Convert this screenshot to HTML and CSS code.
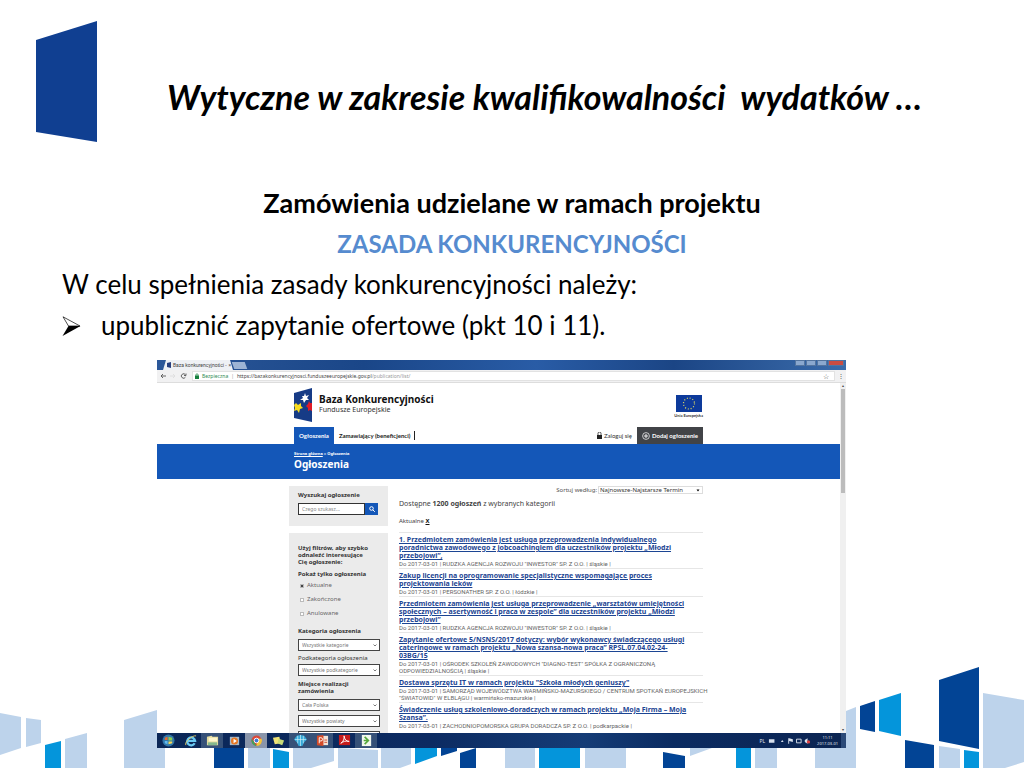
FILE: index.html
```html
<!DOCTYPE html>
<html lang="pl">
<head>
<meta charset="utf-8">
<title>Wytyczne w zakresie kwalifikowalności wydatków</title>
<link rel="stylesheet" href="styles.css">
</head>
<body>
<main class="slide">
  <svg class="decor" viewBox="0 0 1024 108" aria-hidden="true">
    <g transform="translate(0 -660)">
      <g fill="#bdd3eb">
        <path d="M0 713l21 4v31l-21 7zM26 718l15 2v23l-15 4zM65 739l22-6v35H65zM124 720l33-10v38h8v20h-41zM248 748h22v20h-22zM293 748h41v13l-23 7h-18zM338 748l40 2v18h-40zM381 748h30v16l-11 4h-19zM505 748h30v20h-30zM585 748h41v20h-41zM690 748h22l-22 8zM755 748h22v20h-22zM815 748h31v-37l10-4v61h-41zM939 746l21 3v19h-21zM983 693l41 7v62l-19 6h-22z"/>
      </g>
      <g fill="#0495db">
        <path d="M45 745l16-4v27H45zM273 749l16 3v16h-16zM415 748h22v8l-22 8zM539 748h41v20h-41zM736 748h15v20h-15zM879 700l22-7v43l-22-5zM964 750l15 2v16h-15z"/>
      </g>
      <g fill="#024495">
        <path d="M214 748h30v20h-30zM441 748h16v3l-16 5zM460 753l16-5v20h-16zM663 752l22 4v12h-22zM860 706l15-5v31l-15-3zM905 740l29 5v23h-29zM939 680l40-13v82l-40-8z"/>
      </g>
    </g>
  </svg>

  <header class="slide-head">
    <svg class="slide-logo" viewBox="0 0 61 121" aria-hidden="true"><path fill="#103f91" d="M0 19L61 0v121L0 111z"/></svg>
    <h1 class="slide-title">Wytyczne w zakresie kwalifikowalności&nbsp; wydatków …</h1>
  </header>

  <section class="copy">
    <h2 class="lead">Zamówienia udzielane w ramach projektu</h2>
    <h2 class="lead accent">ZASADA KONKURENCYJNOŚCI</h2>
    <p>W celu spełnienia zasady konkurencyjności należy:</p>
    <ul class="points">
      <li><svg class="arrow" viewBox="0 0 18 20" aria-hidden="true"><path d="M0 20L6 10h12z"/><path d="M.5.8L6 10h11.500z" fill="#fff" stroke="#000" stroke-width=".7"/></svg>upublicznić zapytanie ofertowe (pkt 10 i 11).</li>
    </ul>
  </section>

  <section class="desktop">
    <div class="tabbar">
      <div class="tab">
        <svg class="tab-icon" viewBox="0 0 4 6" aria-hidden="true"><path fill="#274080" d="M0 1l4-1v6l-4-1z"/></svg>
        <span>Baza konkurencyjności -</span><span class="tab-close">×</span>
      </div>
      <span class="new-tab"></span>
      <div class="window-buttons"><i></i><i></i><i></i><i class="close"></i></div>
    </div>
    <div class="toolbar">
      <svg class="nav-icons" viewBox="0 0 32 8" aria-hidden="true"><g fill="none" stroke="#555" stroke-width=".9"><path d="M9 4H4m2-2L4 4l2 2"/><path stroke="#ddd" d="M13 4h5m-2-2l2 2-2 2"/><path d="M28.500 3a2.200 2.200 0 1 0 0 2M29 1.500v2h-2"/></g></svg>
      <div class="address">
        <svg class="lock" viewBox="0 0 4 6" aria-hidden="true"><path fill="#16803e" d="M0 2.500h4V6H0z"/><path d="M1 3V1h2v2" fill="none" stroke="#16803e" stroke-width=".6"/></svg>
        <span class="secure">Bezpieczna</span><span class="bar">|</span><span class="url">https://bazakonkurencyjnosci.funduszeeuropejskie.gov.pl<span class="path">/publication/list/</span></span>
        <span class="star">☆</span>
      </div>
      <span class="dots">⋮</span>
    </div>

    <div class="viewport">
      <div class="site">
        <div class="site-head">
          <div class="brand-row">
            <svg class="brand-logo" viewBox="0 0 18 34" aria-hidden="true"><path fill="#163b86" d="M0 5l18-5v34L0 30z"/><path fill="#fff" d="M11 5l1 3 3-1-2 3 2 2-3 0-2 3-1-3-3 0 3-2-1-2 2 0z"/><path fill="#f8dc20" d="M2 15l2 2 3-2 0 3 2 2-3 1-1 4-2-3-3 1 1-3-1-3z"/><path fill="#df1b28" d="M15 13l1 2h2v8l-2-1-2 1v-3l-2-2 2-2z"/></svg>
            <div class="brand-name"><strong>Baza Konkurencyjności</strong><span>Fundusze Europejskie</span></div>
            <div class="eu">
              <svg viewBox="0 0 26 17" aria-hidden="true"><path fill="#0d3a9b" d="M0 0h26v17H0z"/><circle cx="13" cy="8.500" r="5.500" fill="none" stroke="#e2dc60" stroke-width="1.200" stroke-dasharray="1 1.880"/></svg>
              <span>Unia Europejska</span>
            </div>
          </div>
          <nav class="site-nav">
            <a class="active" href="#">Ogłoszenia</a>
            <a class="divided" href="#">Zamawiający (beneficjenci)</a>
            <a class="login" href="#"><svg viewBox="0 0 5 7" aria-hidden="true"><path fill="#222" d="M0 3h5v4H0z"/><path d="M1 3V1.500a1.500 1.500 0 0 1 3 0V3" fill="none" stroke="#222" stroke-width=".8"/></svg>Zaloguj się</a>
            <a class="add" href="#"><svg viewBox="0 0 8 8" aria-hidden="true"><path d="M4 2v4M2 4h4" stroke="#fff" stroke-width=".9"/><circle cx="4" cy="4" r="3.400" fill="none" stroke="#fff" stroke-width=".7"/></svg>Dodaj ogłoszenie</a>
          </nav>
        </div>
        <div class="band">
          <div class="crumbs"><a href="#">Strona główna</a> » Ogłoszenia</div>
          <h3>Ogłoszenia</h3>
        </div>
        <div class="content">
          <aside class="side">
            <form class="box search">
              <label class="side-title" for="q">Wyszukaj ogłoszenie</label>
              <div class="search-row">
                <input id="q" type="text" placeholder="Czego szukasz...">
                <button type="button" aria-label="Szukaj"><svg viewBox="0 0 6 6" aria-hidden="true"><circle cx="2.500" cy="2.500" r="1.800" fill="none" stroke="#fff"/><path d="M3.800 3.800l2 2" stroke="#fff"/></svg></button>
              </div>
            </form>
            <form class="box filters">
              <p class="side-title">Użyj filtrów, aby szybko<br>odnaleźć interesujące<br>Cię ogłoszenie:</p>
              <p class="side-title show">Pokaż tylko ogłoszenia</p>
              <label class="check"><input type="checkbox" checked>Aktualne</label>
              <label class="check"><input type="checkbox">Zakończone</label>
              <label class="check"><input type="checkbox">Anulowane</label>
              <label class="side-title" for="cat">Kategoria ogłoszenia</label>
              <select id="cat"><option>Wszystkie kategorie</option></select>
              <label class="side-label" for="sub">Podkategoria ogłoszenia</label>
              <select id="sub"><option>Wszystkie podkategorie</option></select>
              <label class="side-title place" for="region">Miejsce realizacji<br>zamówienia</label>
              <select id="region"><option>Cała Polska</option></select>
              <select aria-label="Powiat"><option>Wszystkie powiaty</option></select>
              <select aria-label="Gmina"><option></option></select>
            </form>
          </aside>
          <div class="results">
            <div class="sort"><label for="sort">Sortuj według:</label><select id="sort"><option>Najnowsze-Najstarsze Termin</option></select></div>
            <p class="count">Dostępne <strong>1200 ogłoszeń</strong> z wybranych kategorii</p>
            <p class="current">Aktualne <a href="#">X</a></p>
            <article><a href="#">1. Przedmiotem zamówienia jest usługa przeprowadzenia indywidualnego<br>poradnictwa zawodowego z jobcoachingiem dla uczestników projektu „Młodzi<br>przebojowi”,</a><p>Do 2017-03-01 | RUDZKA AGENCJA ROZWOJU "INWESTOR" SP. Z O.O. | śląskie |</p></article>
            <article><a href="#">Zakup licencji na oprogramowanie specjalistyczne wspomagające proces<br>projektowania leków</a><p>Do 2017-03-01 | PERSONATHER SP. Z O.O. | łódzkie |</p></article>
            <article><a href="#">Przedmiotem zamówienia jest usługa przeprowadzenie „warsztatów umiejętności<br>społecznych – asertywność i praca w zespole” dla uczestników projektu „Młodzi<br>przebojowi”</a><p>Do 2017-03-01 | RUDZKA AGENCJA ROZWOJU "INWESTOR" SP. Z O.O. | śląskie |</p></article>
            <article><a href="#">Zapytanie ofertowe 5/NSNS/2017 dotyczy: wybór wykonawcy świadczącego usługi<br>cateringowe w ramach projektu „Nowa szansa-nowa praca” RPSL.07.04.02-24-<br>03BG/15</a><p>Do 2017-03-01 | OŚRODEK SZKOLEŃ ZAWODOWYCH "DIAGNO-TEST" SPÓŁKA Z OGRANICZONĄ<br>ODPOWIEDZIALNOŚCIĄ | śląskie |</p></article>
            <article><a href="#">Dostawa sprzętu IT w ramach projektu "Szkoła młodych geniuszy"</a><p>Do 2017-03-01 | SAMORZĄD WOJEWÓDZTWA WARMIŃSKO-MAZURSKIEGO / CENTRUM SPOTKAŃ EUROPEJSKICH<br>"ŚWIATOWID" W ELBLĄGU | warmińsko-mazurskie |</p></article>
            <article><a href="#">Świadczenie usług szkoleniowo-doradczych w ramach projektu „Moja Firma – Moja<br>Szansa”.</a><p>Do 2017-03-01 | ZACHODNIOPOMORSKA GRUPA DORADCZA SP. Z O.O. | podkarpackie |</p></article>
          </div>
        </div>
      </div>
      <div class="scrollbar"><span>▴</span><i></i><span class="down">▾</span></div>
    </div>

    <div class="taskbar">
      <span class="app"><svg viewBox="0 0 14 14"><circle cx="7" cy="7" r="6.500" fill="#3278aa"/><path fill="#e96c30" d="M3 4l3-1v3.500H3z"/><path fill="#8fce50" d="M7 3l4 1v3H7z"/><path fill="#62b9ee" d="M3 7.500h3V11L3 10z"/><path fill="#fbd855" d="M7 8h4v2l-4 1z"/></svg></span>
      <span class="app"><svg viewBox="0 0 14 14"><path d="M11.500 10A4.300 4.300 0 1 1 12 7.500H4" fill="none" stroke="#69c8f2" stroke-width="2.400"/><path d="M2 12C0 9 9 1 13 2" fill="none" stroke="#e8cf63"/></svg></span>
      <span class="app open"><svg viewBox="0 0 14 14"><path fill="#e6dda0" d="M1 3l5-1 1 1h6v9H1z"/><path fill="#85b98e" d="M2 9h10v3H2z"/><path fill="#fff7cd" d="M3 4h9v4H3z"/></svg></span>
      <span class="app"><svg viewBox="0 0 14 14"><path fill="#a7bac9" d="M2 3h10v9H2z"/><circle cx="7" cy="7.500" r="3.800" fill="#e77824"/><path fill="#fff" d="M6 5l3.500 2.500L6 10z"/></svg></span>
      <span class="app lit"><svg viewBox="0 0 14 14"><circle cx="7" cy="7" r="5.500" fill="#dc493a"/><path fill="#3ca55c" d="M2 5l5 8A6 6 0 0 1 2 5z"/><path fill="#f3c63a" d="M8 5h4.500A6 6 0 0 1 7 13z"/><circle cx="7" cy="7" r="2.500" fill="#3f78d8" stroke="#fff"/></svg></span>
      <span class="app"><svg viewBox="0 0 14 14"><path fill="#f1e477" d="M1 4l7-1 1 7-6 1z"/><path fill="#c9dc78" d="M7 5l6 2-2 5-5-2z"/></svg></span>
      <span class="app open"><svg viewBox="0 0 14 14"><path fill="#35a8d8" d="M3 2l4-1 4 1 3 4-3 3-2 4H5L3 9 0 6z"/><path d="M4 2v8M7 1v12M10 2v8M1 6h12" stroke="#d7f4fb" stroke-width=".7"/></svg></span>
      <span class="app open"><svg viewBox="0 0 14 14"><path fill="#f2e2d7" d="M6 2h7v10H6z"/><path fill="#d34a28" d="M1 2l7-1v12l-7-1z"/><path d="M3.500 10V4h1.800a1.500 1.500 0 0 1 0 3.500H3.500" fill="none" stroke="#fff"/><path d="M9 6.500h3M9 9h3" stroke="#d34a28"/></svg></span>
      <span class="app"><svg viewBox="0 0 14 14"><path fill="#c61b1c" d="M1 1h12v11H1z"/><path d="M3 10c3-2 4-5 3.500-8C7 6 9 8 12 8 8 7 6 8 3 10z" fill="none" stroke="#fff"/></svg></span>
      <span class="app open"><svg viewBox="0 0 14 14"><path fill="#f1f7ec" d="M2 1h10v12H2z"/><path d="M5 3l4 4-4 4M4 7h4" fill="none" stroke="#55a63b" stroke-width="1.800"/></svg></span>
      <div class="tray">
        <span>PL</span>
        <svg viewBox="0 0 50 8" aria-hidden="true"><g fill="#d8e0ec"><path d="M1 2h6v4H1zM14 5l1.500-2L17 5zM22 1h1v6h-1zM23 1l4 1v3l-4-1z"/><path d="M31 2h5v4h-5z" fill="none" stroke="#d8e0ec"/><path d="M40 3l3-2v6l-3-2z"/></g><circle cx="44" cy="5" r="1.800" fill="#dd4141"/></svg>
        <time>11:11<br>2017-03-01</time>
        <i class="peek"></i>
      </div>
    </div>
  </section>
</main>
</body>
</html>
```
FILE: styles.css
```css
* { box-sizing: border-box; }
body { margin: 0; background: #fff; color: #000; font-family: Lato, sans-serif; }
h1, h2, h3, p, ul { margin: 0; padding: 0; }
a { color: inherit; }
svg { display: block; flex: none; }

.slide { position: relative; min-height: 100vh; padding-bottom: 20px; overflow: hidden; }
.decor { position: absolute; left: 0; bottom: 0; width: 100%; }
.slide-head { display: flex; padding: 21px 32px 0 36px; }
.slide-logo { width: 61px; height: 121px; }
.slide-title { flex: 1; padding-top: 56px; font-size: 34px; line-height: 40px; font-style: italic; text-align: center; white-space: nowrap; }
.copy { padding: 40px 62px 0; font-size: 26px; line-height: 41px; }
.lead { font-size: 27px; text-align: center; }
.accent { color: #568bcf; font-size: 24px; }
.points { list-style: none; }
.points li { display: flex; align-items: center; gap: 20px; }
.arrow { width: 19px; height: 20px; }

/* captured browser window */
.desktop { position: relative; margin: 14px 178px 0 157px; background: #fff; font-family: "Noto Sans", sans-serif; font-size: 6px; line-height: 7px; color: #444; white-space: nowrap; }
.tabbar { display: flex; height: 10px; padding-left: 6px; background: linear-gradient(90deg, #2c5899, #1a4688 30%, #295ca6 55%, #1b4585 75%, #3b6cab); }
.tab { display: flex; align-items: center; gap: 2px; width: 70px; padding-left: 4px; background: #eef1f5; clip-path: polygon(3px 0, 67px 0, 100% 100%, 0 100%); font: 5px Roboto, sans-serif; }
.tab-icon { width: 4px; height: 6px; }
.tab-close { margin-left: auto; padding-right: 4px; }
.new-tab { width: 13px; height: 7px; margin-top: 2px; background: #9db4d4; transform: skewX(20deg); }
.window-buttons { display: flex; gap: 1px; height: 6px; margin-left: auto; padding-right: 2px; }
.window-buttons i { width: 10px; background: #8ba8ce; border: 1px solid #53749f; }
.window-buttons .close { width: 16px; background: #cb4c42; }
.toolbar { display: flex; align-items: center; gap: 3px; height: 13px; padding-right: 4px; background: #f1f1f2; border-bottom: 1px solid #ddd; }
.nav-icons { width: 32px; height: 8px; }
.address { flex: 1; display: flex; align-items: center; gap: 3px; height: 10px; padding: 0 5px 0 2px; background: #fff; border: 1px solid #e2e2e2; font: 5px "Noto Sans", sans-serif; }
.lock { width: 4px; height: 6px; }
.secure { color: #2e8b54; }
.bar, .path { color: #999; }
.star { margin-left: auto; font-size: 7px; }
.dots { width: 4px; text-align: center; }

.viewport { display: flex; height: 350px; overflow: hidden; }
.site { flex: 1; min-width: 0; }
.site-head { padding: 5px 137px 0; }
.brand-row { display: flex; height: 39px; }
.brand-logo { width: 18px; height: 34px; }
.brand-name { padding: 6px 0 0 7px; color: #333; font-size: 7px; line-height: 10px; }
.brand-name strong { display: block; color: #111; font-size: 10px; line-height: 11px; }
.eu { margin-left: auto; padding-top: 7px; color: #333; font: bold 4px/5px Lato, sans-serif; text-align: center; }
.eu svg { width: 26px; height: 17px; margin: 0 auto 1px; }
.site-nav { display: flex; align-items: center; height: 17px; color: #333; font-family: Lato, sans-serif; }
.site-nav a { display: flex; align-items: center; gap: 2px; text-decoration: none; }
.site-nav .active, .site-nav .add { height: 17px; padding: 0 5px; background: #1457b8; color: #fff; font-weight: bold; }
.site-nav .divided { height: 9px; margin-left: 5px; padding-right: 4px; border-right: 1px solid #222; color: #222; font-weight: bold; }
.site-nav .login { margin: 0 5px 0 auto; }
.login svg { width: 5px; height: 7px; }
.site-nav .add { background: #414347; }
.add svg { width: 8px; height: 8px; }
.band { height: 35px; padding: 7px 137px 0; background: #1457b8; color: #fff; }
.crumbs { font-size: 4px; line-height: 6px; font-weight: bold; }
.band h3 { font-size: 10px; line-height: 14px; }
.content { display: flex; gap: 11px; padding: 7px 137px 0 132px; }
.side { flex: none; width: 99px; }
.box { padding: 0 9px; background: #ebebeb; }
.search { height: 40px; padding-top: 6px; margin-bottom: 7px; }
.side-title, .side-label { display: block; color: #333; font-weight: bold; line-height: 7px; }
.side-label { font-weight: normal; margin-bottom: 2px; }
.search-row { display: flex; width: 80px; height: 12px; margin-top: 4px; }
.search-row input { flex: 1; min-width: 0; padding: 0 3px; border: 1px solid #333; border-radius: 0; font: 5px "Noto Sans", sans-serif; }
.search-row input::placeholder { color: #888; }
.search-row button { display: grid; place-items: center; width: 13px; padding: 0; border: 0; background: #1457b8; }
.search-row button svg { width: 6px; height: 6px; }
.filters { min-height: 220px; padding-top: 12px; }
.show { margin: 5px 0 4px; }
.check { display: flex; align-items: center; gap: 3px; height: 7px; margin: 0 0 7px 2px; color: #666; }
.check + .side-title { margin: 11px 0 4px; }
.check input { appearance: none; width: 4px; height: 4px; margin: 0; border: 1px solid #bbb; background: #fff; }
.check input:checked { background: #444; }
.filters select { appearance: none; display: block; width: 82px; height: 12px; margin-bottom: 4px; padding: 0 3px; border: 1px solid #444; border-radius: 0; background: #fff url("data:image/svg+xml,%3Csvg xmlns='http://www.w3.org/2000/svg' viewBox='0 0 4 3'%3E%3Cpath d='M.5.5L2 2 3.500.5' fill='none' stroke='%23444' stroke-width='.7'/%3E%3C/svg%3E") no-repeat right 2px center / 4px 3px; color: #777; font: 5px "Noto Sans", sans-serif; }
.filters .place { margin: 5px 0 4px; }

.results { flex: 1; min-width: 0; }
.sort { display: flex; justify-content: flex-end; align-items: center; height: 8px; color: #555; }
.sort select { appearance: none; width: 105px; height: 8px; margin-left: 1px; padding: 0 1px; border: 1px solid #ddd; background: #fff url("data:image/svg+xml,%3Csvg xmlns='http://www.w3.org/2000/svg' viewBox='0 0 4 3'%3E%3Cpath d='M.5.5h3L2 2.500z'/%3E%3C/svg%3E") no-repeat right 2px center / 4px 3px; color: #333; font: 6px "Noto Sans", sans-serif; line-height: 6px; }
.count { padding-top: 5px; font-size: 7px; line-height: 10px; }
.current { padding: 9px 0 7px; }
.current a { color: #111; font-weight: bold; }
.results article { padding: 3px 0 1px; border-top: 1px solid #e6e6e6; color: #666; font-family: Roboto, sans-serif; }
.results article a { display: block; color: #1c4593; font: bold 7px/8px "Noto Sans", sans-serif; }

.scrollbar { display: flex; flex-direction: column; width: 6px; background: #f0f0f0; font-size: 4px; line-height: 6px; text-align: center; }
.scrollbar i { height: 104px; margin: 0 1px; background: #bcbcbc; }
.scrollbar .down { margin-top: auto; }
.taskbar { display: flex; height: 15px; background: linear-gradient(90deg, #0b2757, #0c2b62 40%, #153c76 62%, #0b2b61 75%, #0c2552); }
.app { display: grid; place-items: center; width: 22px; }
.app svg { width: 13px; height: 13px; }
.open { background: #365178; }
.lit { background: #8995aa; }
.tray { display: flex; align-items: center; gap: 3px; margin-left: auto; color: #e0e6ef; font-size: 5px; line-height: 6px; text-align: center; }
.tray svg { width: 46px; height: 8px; }
.tray time { font-size: 4px; }
.peek { width: 5px; height: 15px; background: #2c4a78; }
```
